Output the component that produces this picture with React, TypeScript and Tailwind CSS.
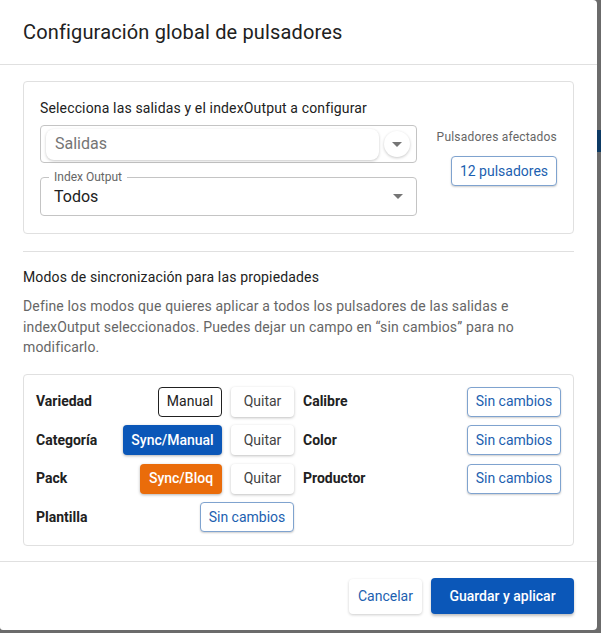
const font = { fontFamily: "Roboto, 'Noto Sans', sans-serif" };

type Row = {
  label: string;
  actions: Array<{ text: string; kind: "manual" | "quitar" | "blue" | "orange" | "outline"; w: string }>;
};

const leftRows: Row[] = [
  {
    label: "Variedad",
    actions: [
      { text: "Manual", kind: "manual", w: "w-[64px]" },
      { text: "Quitar", kind: "quitar", w: "w-[63px]" }
    ]
  },
  {
    label: "Categoría",
    actions: [
      { text: "Sync/Manual", kind: "blue", w: "w-[99px]" },
      { text: "Quitar", kind: "quitar", w: "w-[63px]" }
    ]
  },
  {
    label: "Pack",
    actions: [
      { text: "Sync/Bloq", kind: "orange", w: "w-[82px]" },
      { text: "Quitar", kind: "quitar", w: "w-[63px]" }
    ]
  },
  {
    label: "Plantilla",
    actions: [{ text: "Sin cambios", kind: "outline", w: "w-[94px]" }]
  }
];

const rightRows: Row[] = [
  { label: "Calibre", actions: [{ text: "Sin cambios", kind: "outline", w: "w-[94px]" }] },
  { label: "Color", actions: [{ text: "Sin cambios", kind: "outline", w: "w-[94px]" }] },
  { label: "Productor", actions: [{ text: "Sin cambios", kind: "outline", w: "w-[94px]" }] }
];

const kindClass = {
  manual: "border border-[#212121] bg-white text-[#212121]",
  quitar: "bg-white text-[#424242] shadow-[0_1px_3px_rgba(0,0,0,0.25)]",
  blue: "bg-[#0b57b8] text-white font-medium shadow-[0_1px_3px_rgba(0,0,0,0.3)]",
  orange: "bg-[#ea6c0a] text-white font-medium shadow-[0_1px_3px_rgba(0,0,0,0.3)]",
  outline: "border border-[#7fa3cf] bg-white text-[#1c5fb0] shadow-[0_1px_2px_rgba(0,0,0,0.2)]"
};

function Caret() {
  return (
    <svg width="10" height="5" viewBox="0 0 10 5">
      <path d="M0 0 L5 5 L10 0 Z" fill="#757575" />
    </svg>
  );
}

function PropRow({ row }: { row: Row }) {
  return (
    <div className="flex h-[30px] items-center justify-between">
      <span className="text-[14px] font-bold text-[#212121]">{row.label}</span>
      <div className="flex gap-[9px]">
        {row.actions.map((a, i) => (
          <button
            key={i}
            className={`flex h-[30px] items-center justify-center rounded-[4px] text-[14px] ${a.w} ${kindClass[a.kind]}`}
          >
            {a.text}
          </button>
        ))}
      </div>
    </div>
  );
}

export default function App() {
  return (
    <div className="flex h-[633px] w-[601px] bg-[#6b6b6b]" style={font}>
      <div className="flex h-[630px] w-[597px] flex-col rounded-r-[4px] rounded-bl-[3px] bg-white">
        {/* header */}
        <div className="flex h-[65px] shrink-0 items-center border-b border-[#e0e0e0] px-[23px]">
          <h2 className="text-[20px] tracking-[0.15px] text-[#212121]">Configuración global de pulsadores</h2>
        </div>

        {/* content */}
        <div className="flex flex-1 flex-col px-[23px] pt-[16px]">
          <div className="flex h-[153px] justify-between rounded-[4px] border border-[#e0e0e0] px-[16px] pt-[16px]">
            <div className="flex w-[377px] flex-col">
              <p className="h-[20px] text-[14px] leading-[20px] tracking-[0.15px] text-[#212121]">
                Selecciona las salidas y el indexOutput a configurar
              </p>
              <div className="mt-[7px] flex h-[38px] items-center gap-[5px] rounded-[4px] border border-[#c4c4c4] pl-[5px]">
                <div className="flex h-[31px] w-[333px] items-center rounded-[8px] bg-white pl-[9px] text-[16px] text-[#757575] shadow-[0_1px_3px_rgba(0,0,0,0.22)]">
                  Salidas
                </div>
                <div className="flex h-[26px] w-[26px] items-center justify-center rounded-full bg-white shadow-[0_1px_3px_rgba(0,0,0,0.22)]">
                  <Caret />
                </div>
              </div>
              <div className="relative mt-[14px] flex h-[39px] items-center justify-between rounded-[4px] border border-[#c4c4c4] pl-[13px] pr-[13px]">
                <span className="absolute -top-[9px] left-[8px] bg-white px-[5px] text-[12px] leading-[16px] text-[#666]">
                  Index Output
                </span>
                <span className="text-[16px] text-[#212121]">Todos</span>
                <Caret />
              </div>
            </div>
            <div className="flex flex-col items-end pt-[31px]">
              <span className="text-[12px] leading-[16px] tracking-[0.2px] text-[#666]">Pulsadores afectados</span>
              <button className="mt-[11px] flex h-[30px] w-[106px] items-center justify-center rounded-[4px] border border-[#7fa3cf] bg-white text-[14px] text-[#1c5fb0] shadow-[0_1px_2px_rgba(0,0,0,0.2)]">
                12 pulsadores
              </button>
            </div>
          </div>

          <div className="mt-[17px] border-t border-[#e0e0e0]" />

          <p className="mt-[15px] text-[14px] leading-[20px] tracking-[0.15px] text-[#212121]">
            Modos de sincronización para las propiedades
          </p>
          <p className="mt-[9px] text-[14px] leading-[20.5px] tracking-[0.15px] text-[#666]">
            Define los modos que quieres aplicar a todos los pulsadores de las salidas e indexOutput
            seleccionados. Puedes dejar un campo en “sin cambios” para no modificarlo.
          </p>

          <div className="mt-[16px] grid h-[172px] grid-cols-2 gap-x-[9px] rounded-[4px] border border-[#e0e0e0] p-[12px]">
            <div className="flex flex-col gap-[8.67px]">
              {leftRows.map((r) => (
                <PropRow key={r.label} row={r} />
              ))}
            </div>
            <div className="flex flex-col gap-[8.67px]">
              {rightRows.map((r) => (
                <PropRow key={r.label} row={r} />
              ))}
            </div>
          </div>
        </div>

        {/* footer */}
        <div className="flex h-[69px] shrink-0 items-center justify-end gap-[9px] border-t border-[#e0e0e0] px-[23px]">
          <button className="flex h-[35px] w-[73px] items-center justify-center rounded-[4px] bg-white text-[14px] text-[#1c5fb0] shadow-[0_1px_3px_rgba(0,0,0,0.2)]">
            Cancelar
          </button>
          <button className="flex h-[36px] w-[143px] items-center justify-center rounded-[4px] bg-[#0b57b8] text-[14px] font-medium text-white shadow-[0_2px_3px_rgba(0,0,0,0.25)]">
            Guardar y aplicar
          </button>
        </div>
      </div>
      <div className="flex w-[4px] flex-col">
        <div className="mt-[130px] h-[22px] bg-[#0d3a64]" />
      </div>
    </div>
  );
}
